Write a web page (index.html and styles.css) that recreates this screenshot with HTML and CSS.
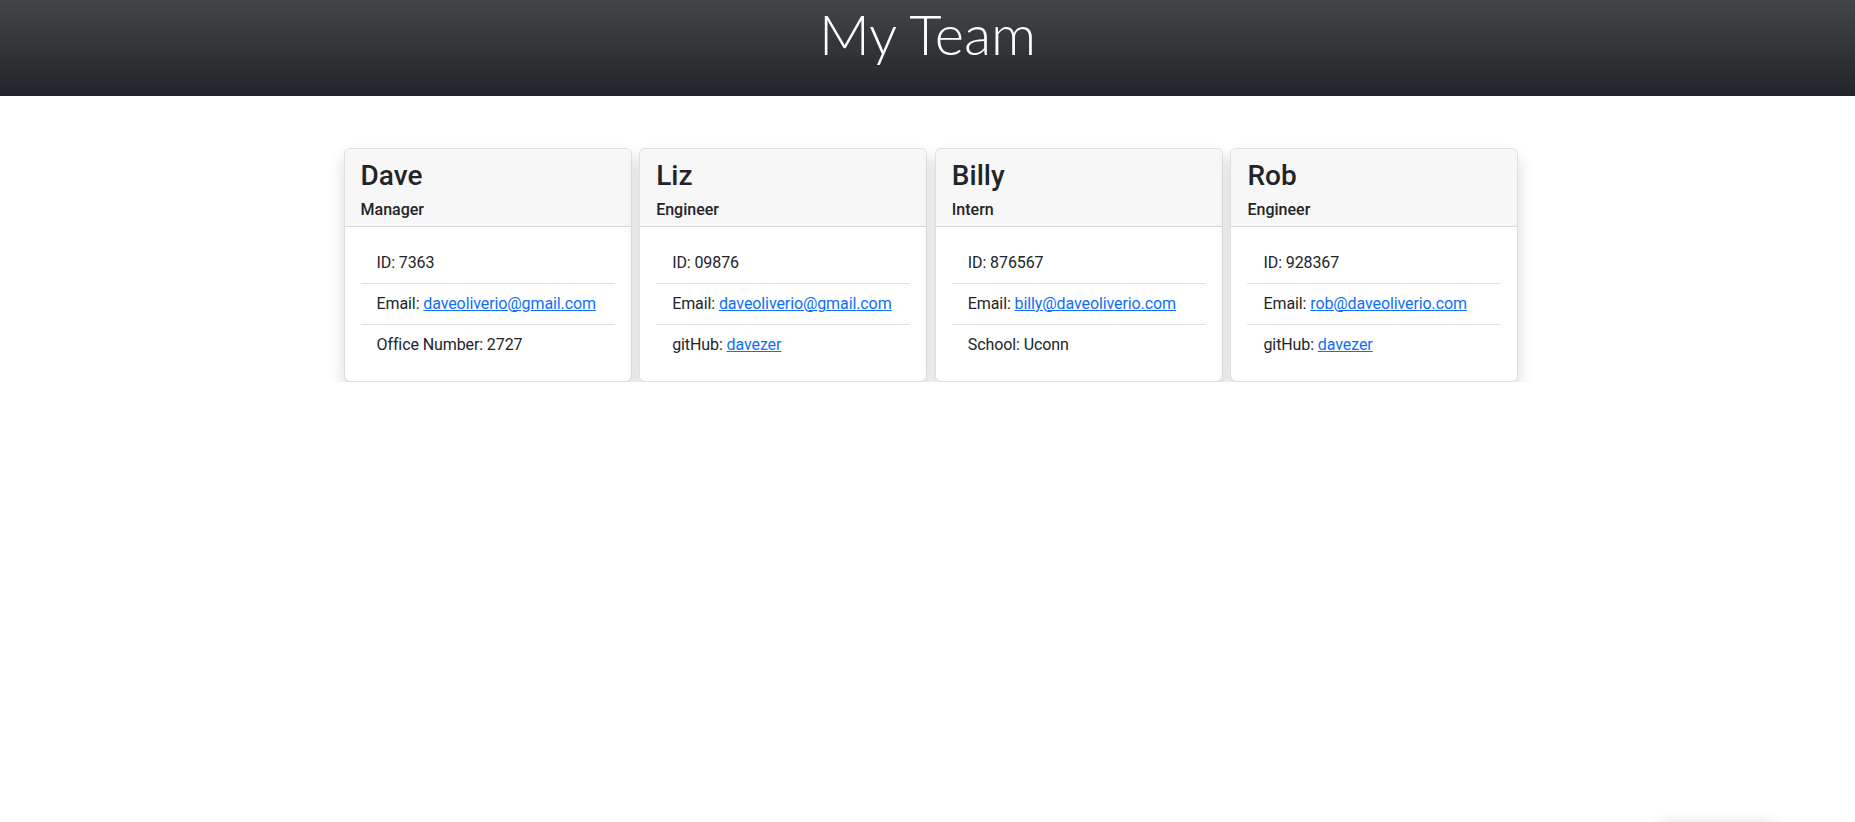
FILE: index.html
```html
<!DOCTYPE html>
<html lang="en">
<head>
<meta charset="utf-8">
<title>My Team</title>
<link rel="stylesheet" href="styles.css">
</head>
<body>
<header class="banner">
  <h1 class="banner-title">My Team</h1>
</header>
<main class="team">
  <div class="card">
    <div class="card-header">
      <h3 class="card-name">Dave</h3>
      <h6 class="card-role">Manager</h6>
    </div>
    <div class="card-body">
      <ul class="list">
        <li class="list-item">ID: 7363</li>
        <li class="list-item">Email: <a href="#">daveoliverio@gmail.com</a></li>
        <li class="list-item">Office Number: 2727</li>
      </ul>
    </div>
  </div>
  <div class="card">
    <div class="card-header">
      <h3 class="card-name">Liz</h3>
      <h6 class="card-role">Engineer</h6>
    </div>
    <div class="card-body">
      <ul class="list">
        <li class="list-item">ID: 09876</li>
        <li class="list-item">Email: <a href="#">daveoliverio@gmail.com</a></li>
        <li class="list-item">gitHub: <a href="#">davezer</a></li>
      </ul>
    </div>
  </div>
  <div class="card">
    <div class="card-header">
      <h3 class="card-name">Billy</h3>
      <h6 class="card-role">Intern</h6>
    </div>
    <div class="card-body">
      <ul class="list">
        <li class="list-item">ID: 876567</li>
        <li class="list-item">Email: <a href="#">billy@daveoliverio.com</a></li>
        <li class="list-item">School: Uconn</li>
      </ul>
    </div>
  </div>
  <div class="card">
    <div class="card-header">
      <h3 class="card-name">Rob</h3>
      <h6 class="card-role">Engineer</h6>
    </div>
    <div class="card-body">
      <ul class="list">
        <li class="list-item">ID: 928367</li>
        <li class="list-item">Email: <a href="#">rob@daveoliverio.com</a></li>
        <li class="list-item">gitHub: <a href="#">davezer</a></li>
      </ul>
    </div>
  </div>
</main>
<div class="offscreen-toast"></div>
</body>
</html>
```

FILE: styles.css
```css
* { box-sizing: border-box; }

html, body {
  margin: 0;
  padding: 0;
  background: #fff;
}

body {
  font-family: Roboto, "Liberation Sans", sans-serif;
  font-size: 16px;
  line-height: 1.5;
  color: #212529;
}

.banner {
  height: 96px;
  background-color: #212529;
  background-image: linear-gradient(180deg, rgba(255,255,255,0.15), rgba(255,255,255,0));
  display: flex;
  justify-content: center;
}

.banner-title {
  margin: 0;
  font-family: Lato, Roboto, sans-serif;
  font-size: 56px;
  font-weight: 300;
  line-height: 1.2;
  color: #fff;
}

.team {
  display: grid;
  grid-template-columns: repeat(4, 288px);
  column-gap: 7.67px;
  justify-content: center;
  padding-left: 7px;
  margin-top: 52px;
}

.card {
  background: #fff;
  border: 1px solid rgba(0,0,0,0.125);
  border-radius: 6px;
  box-shadow: 0 8px 16px rgba(0,0,0,0.15);
  overflow: hidden;
}

.card-header {
  background: #f7f7f7;
  border-bottom: 1px solid rgba(0,0,0,0.125);
  padding: 9px 16px 7px;
}

.card-name {
  margin: 0 0 8px;
  padding-top: 2px;
  font-size: 28px;
  font-weight: 500;
  line-height: 31.6px;
}

.card-role {
  margin: 0;
  font-size: 16px;
  font-weight: 500;
  line-height: 1.2;
}

.card-body {
  padding: 16px;
}

.list {
  list-style: none;
  margin: 0;
  padding: 0;
}

.list-item {
  padding: 8px 16px;
  border-bottom: 1px solid #dee2e6;
  white-space: nowrap;
  letter-spacing: -0.1px;
}

.list-item:last-child {
  border-bottom: 0;
}

.list-item a {
  color: #0d6efd;
  text-decoration: underline;
}

.offscreen-toast {
  position: fixed;
  left: 1660px;
  bottom: -60px;
  width: 115px;
  height: 56px;
  background: #fff;
  border-radius: 6px;
  box-shadow: 0 0 16px rgba(0,0,0,0.22);
}
```
